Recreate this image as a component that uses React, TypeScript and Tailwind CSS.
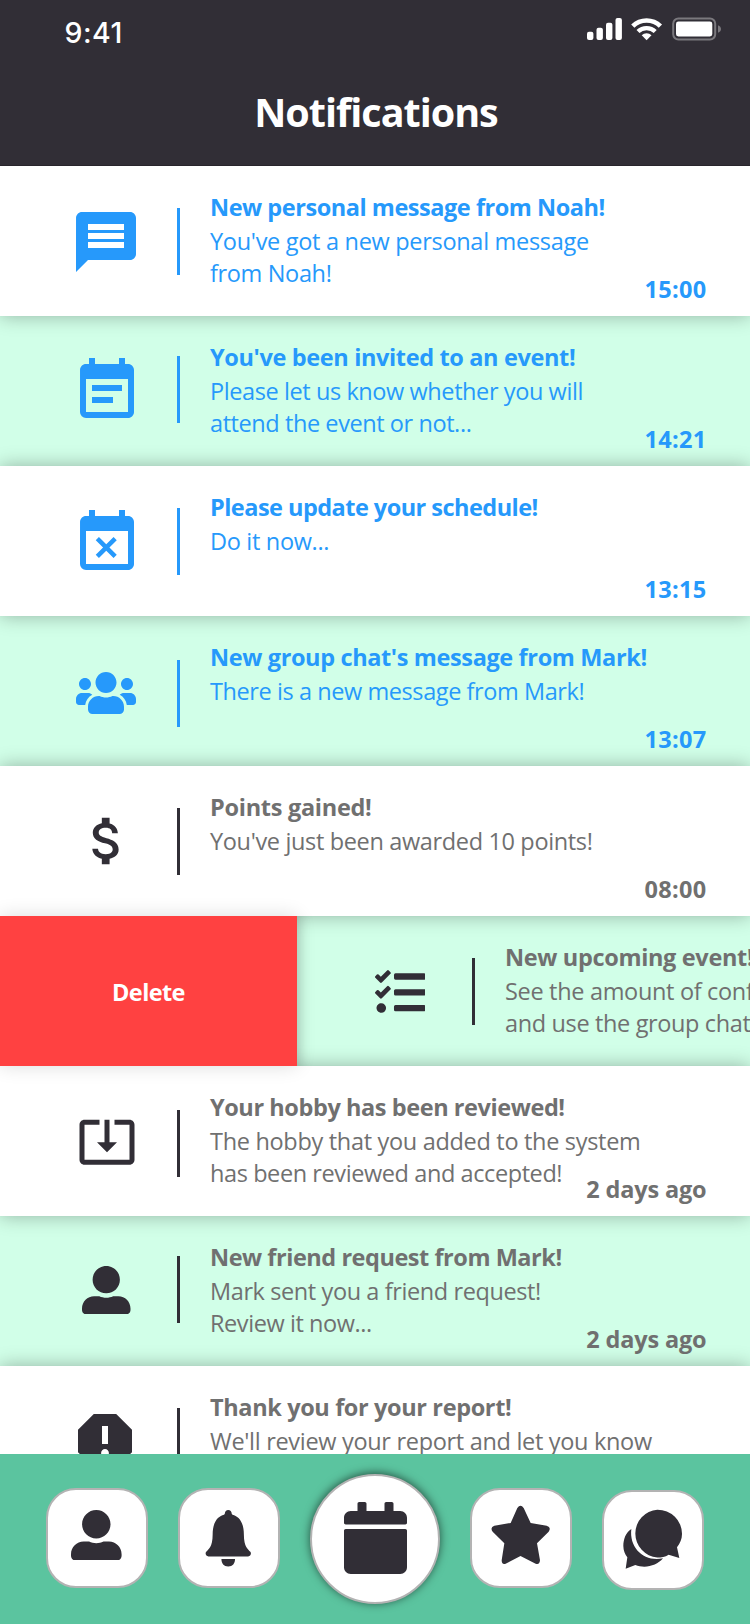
import React from 'react';
import { MdAttachMoney, MdEventBusy, MdEventNote, MdMessage, MdReport, MdSystemUpdateAlt } from 'react-icons/md';
import { FaCalendar, FaTasks, FaUserAlt, FaUsers } from 'react-icons/fa';
import { IoIosNotifications } from 'react-icons/io';

type Line = { text: string; tracking: string };

type Notification = {
  icon: React.ReactNode;
  iconPlace: string;
  dividerTop: string;
  title: Line;
  body: Line[];
  time: string;
  unread?: boolean;
  swiped?: boolean;
};

const notifications: Notification[] = [
  {
    icon: <MdMessage size={72} />,
    iconPlace: 'pl-[70px] pt-[40px]',
    dividerTop: 'mt-[41.5px]',
    title: { text: 'New personal message from Noah!', tracking: 'tracking-[-0.46px]' },
    body: [
      { text: "You've got a new personal message", tracking: 'tracking-[-0.3px]' },
      { text: 'from Noah!', tracking: 'tracking-[-0.35px]' },
    ],
    time: '15:00',
    unread: true,
  },
  {
    icon: <MdEventNote size={72} />,
    iconPlace: 'pl-[71px] pt-[39px]',
    dividerTop: 'mt-[39.5px]',
    title: { text: "You've been invited to an event!", tracking: 'tracking-[-0.36px]' },
    body: [
      { text: 'Please let us know whether you will', tracking: 'tracking-[-0.41px]' },
      { text: 'attend the event or not...', tracking: 'tracking-[-0.42px]' },
    ],
    time: '14:21',
    unread: true,
  },
  {
    icon: <MdEventBusy size={72} />,
    iconPlace: 'pl-[71px] pt-[41px]',
    dividerTop: 'mt-[41.5px]',
    title: { text: 'Please update your schedule!', tracking: 'tracking-[-0.53px]' },
    body: [{ text: 'Do it now...', tracking: 'tracking-[-0.32px]' }],
    time: '13:15',
    unread: true,
  },
  {
    icon: <FaUsers className="h-12 w-[60px]" />,
    iconPlace: 'pl-[76px] pt-[52.7px]',
    dividerTop: 'mt-[43.5px]',
    title: { text: "New group chat's message from Mark!", tracking: 'tracking-[-0.37px]' },
    body: [{ text: 'There is a new message from Mark!', tracking: 'tracking-[-0.42px]' }],
    time: '13:07',
    unread: true,
  },
  {
    icon: <MdAttachMoney size={62} />,
    iconPlace: 'pl-[76px] pt-[44px]',
    dividerTop: 'mt-[41.5px]',
    title: { text: 'Points gained!', tracking: 'tracking-[-0.28px]' },
    body: [{ text: "You've just been awarded 10 points!", tracking: 'tracking-[-0.35px]' }],
    time: '08:00',
  },
  {
    icon: <FaTasks size={50.6} />,
    iconPlace: 'pl-[77.8px] pt-[51px]',
    dividerTop: 'mt-[41.5px]',
    title: { text: 'New upcoming event!', tracking: 'tracking-[-0.34px]' },
    body: [
      { text: 'See the amount of confirmed people', tracking: 'tracking-[-0.32px]' },
      { text: 'and use the group chat', tracking: 'tracking-[-0.36px]' },
    ],
    time: '',
    swiped: true,
  },
  {
    icon: <MdSystemUpdateAlt size={60} />,
    iconPlace: 'pl-[77.3px] pt-[45px]',
    dividerTop: 'mt-[43.5px]',
    title: { text: 'Your hobby has been reviewed!', tracking: 'tracking-[-0.42px]' },
    body: [
      { text: 'The hobby that you added to the system', tracking: 'tracking-[-0.31px]' },
      { text: 'has been reviewed and accepted!', tracking: 'tracking-[-0.41px]' },
    ],
    time: '2 days ago',
  },
  {
    icon: <FaUserAlt size={48.5} />,
    iconPlace: 'pl-[82px] pt-[49.5px]',
    dividerTop: 'mt-[39.5px]',
    title: { text: 'New friend request from Mark!', tracking: 'tracking-[-0.46px]' },
    body: [
      { text: 'Mark sent you a friend request!', tracking: 'tracking-[-0.4px]' },
      { text: 'Review it now...', tracking: 'tracking-[-0.42px]' },
    ],
    time: '2 days ago',
  },
  {
    icon: <MdReport size={72} />,
    iconPlace: 'pl-[69.4px] pt-[39px]',
    dividerTop: 'mt-[41.5px]',
    title: { text: 'Thank you for your report!', tracking: 'tracking-[-0.37px]' },
    body: [{ text: "We'll review your report and let you know", tracking: 'tracking-[-0.31px]' }],
    time: '',
  },
];

function StatusIcons() {
  return (
    <svg className="mt-[14px] h-[30px] w-[140px]" viewBox="584 14 140 30" fill="white">
      <rect x="587" y="31.7" width="6.4" height="8.3" rx="2" />
      <rect x="596.5" y="27.8" width="6.4" height="12.2" rx="2" />
      <rect x="606" y="22.8" width="6.4" height="17.2" rx="2" />
      <rect x="615.5" y="18" width="6.4" height="22" rx="2" />
      <g fill="none" stroke="white">
        <path d="M632.8 26.2a19.5 19.5 0 0 1 27.6 0" strokeWidth="4.6" />
        <path d="M638 31.6a12.2 12.2 0 0 1 17.2 0" strokeWidth="4.2" />
      </g>
      <path d="M646.6 40.2l-4.9-5a7 7 0 0 1 9.8 0z" />
      <rect x="673.2" y="18.5" width="42" height="21" rx="5.2" fill="none" stroke="#7a787d" strokeWidth="2" />
      <rect x="676" y="21.5" width="36.3" height="15" rx="2.4" />
      <path d="M718 25.2c2 .8 3 2.2 3 3.8s-1 3-3 3.8z" fill="#7a787d" />
    </svg>
  );
}

function StarIcon() {
  return (
    <svg className="h-[60px] w-[59px]" viewBox="349 420 177 180" fill="currentColor">
      <path d="M428 429 Q437.500 416 447 429 L468 474 L516 482 Q531 487 522 500 L487 535 L496 586 Q495 600 483 596 L437.500 573 L393 596 Q381 600 381 586 L389 535 L354 500 Q345 487 359 482 L408 474Z" />
    </svg>
  );
}

function ChatIcon() {
  return (
    <svg className="h-[60px] w-[60px]" viewBox="746 432 180 180" fill="currentColor">
      <path d="M849 434A73.500 72 0 0 1 923 507C923 522 917 535 908 547L915 579L883 569C872 576 861 577.500 849 577.500A72 72 0 0 1 849 434Z" />
      <path d="M771 492C754 502 747 524 747 543C747 557 752 568 759 577L754 611L783 600C812 611 847 603 866 580C810 592 764 550 771 492Z" />
    </svg>
  );
}

function Row({ item, green }: { item: Notification; green: boolean }) {
  const accent = item.unread ? 'text-[#2699fb]' : 'text-[#312e36]';
  const text = item.unread ? 'text-[#2699fb]' : 'text-[#707070]';
  const timeTracking = item.time.includes(':') ? 'tracking-[0.3px]' : 'tracking-[-0.15px]';
  return (
    <li
      className={
        green
          ? 'flex h-[150px] shrink-0 bg-[#d1ffe8]'
          : 'relative z-10 flex h-[150px] shrink-0 bg-white shadow-[0_0_18px_rgba(0,0,0,0.3)]'
      }
    >
      {item.swiped && (
        <button className="relative z-20 h-full w-[297px] shrink-0 bg-[#ff4141] pt-px text-center font-bold tracking-[-0.6px] text-white shadow-[0_0_18px_rgba(0,0,0,0.14)]">
          Delete
        </button>
      )}
      <div
        className={
          item.swiped
            ? 'flex min-w-0 flex-1 overflow-hidden shadow-[inset_12px_0_12px_-10px_rgba(0,0,0,0.15)]'
            : 'flex min-w-0 flex-1'
        }
      >
        <div className={`${item.swiped ? 'w-[175px]' : 'w-[177px]'} shrink-0 ${item.iconPlace} ${accent}`}>
          {item.icon}
        </div>
        <div className={`h-[67px] w-[3px] shrink-0 bg-current ${item.dividerTop} ${accent}`} />
        <div className={`ml-[30px] min-w-0 flex-1 pt-[25px] whitespace-nowrap ${text}`}>
          <h2 className={`mb-0.5 font-bold ${item.title.tracking}`}>{item.title.text}</h2>
          {item.body.map((line) => (
            <p key={line.text} className={line.tracking}>
              {line.text}
            </p>
          ))}
        </div>
        {item.time && (
          <time className={`mt-[107px] mr-[43.5px] shrink-0 font-bold whitespace-nowrap ${timeTracking} ${text}`}>
            {item.time}
          </time>
        )}
      </div>
    </li>
  );
}

const tile =
  'flex h-[100px] w-[102px] items-start rounded-[30px] border-2 border-[#b3b3b3] bg-white text-[#312e36]';

export default function App() {
  return (
    <div className="flex h-[1624px] w-[750px] flex-col overflow-hidden bg-white font-['Open_Sans','Noto_Sans',sans-serif] text-[23.5px] leading-8">
      <header className="relative z-20 h-[166px] shrink-0 border-b border-[#28252c] bg-[#312e36] text-white">
        <div className="flex h-[60px] items-start justify-between pr-[26px] pl-[64.5px]">
          <span className="mt-[17px] font-['Inter',sans-serif] text-[28.5px] font-medium tracking-[0.5px]">9:41</span>
          <StatusIcons />
        </div>
        <h1 className="mt-[26.5px] pl-0.5 text-center text-[39.5px] leading-[50px] font-bold tracking-[-1px]">
          Notifications
        </h1>
      </header>

      <ul className="flex min-h-0 flex-1 flex-col overflow-hidden">
        {notifications.map((item, i) => (
          <Row key={item.title.text} item={item} green={i % 2 === 1} />
        ))}
      </ul>

      <nav className="relative z-20 flex h-[170px] shrink-0 items-start bg-[#5bc49f] pl-[46px]">
        <button className={`${tile} mt-[34px] pt-[19.7px] pl-[23px]`}>
          <FaUserAlt size={50.6} />
        </button>
        <button className={`${tile} mt-[34px] ml-[30px] pt-[11.5px] pl-[12px]`}>
          <IoIosNotifications className="shrink-0" size={72.5} />
        </button>
        <button className="mt-[20px] ml-[30px] flex h-[130px] w-[130px] items-start rounded-full border-2 border-[#b3b3b3] bg-white pt-[26px] pl-[32px] text-[#312e36] shadow-[0_-1px_10px_rgba(0,0,0,0.6)]">
          <FaCalendar className="h-[72px] w-[63px]" />
        </button>
        <button className={`${tile} mt-[34px] ml-[30px] pt-[15px] pl-[19px]`}>
          <StarIcon />
        </button>
        <button className={`${tile} mt-[36px] ml-[30px] pt-[17px] pl-[19.4px]`}>
          <ChatIcon />
        </button>
      </nav>
    </div>
  );
}
